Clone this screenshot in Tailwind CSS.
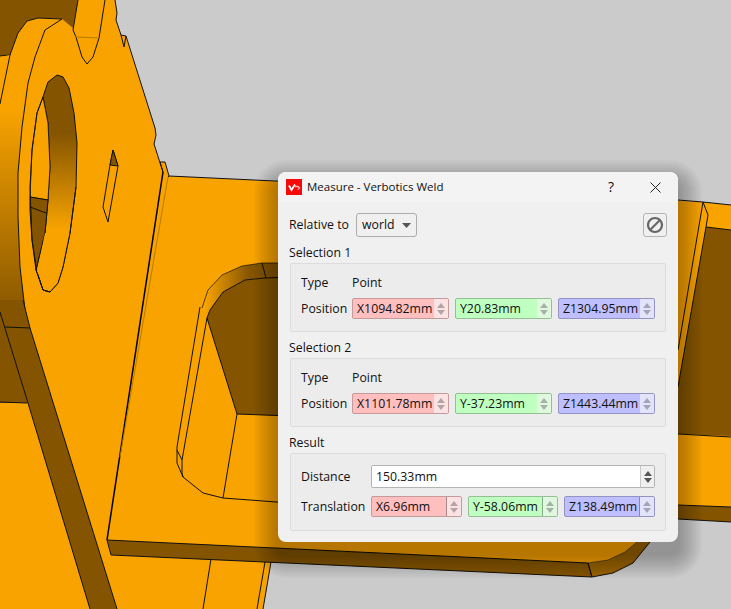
<!DOCTYPE html>
<html lang="en">
<head>
    <meta charset="UTF-8">
    <title>Measure - Verbotics Weld</title>
    <script src="https://cdn.jsdelivr.net/npm/@tailwindcss/browser@4"></script>
</head>
<body class="relative w-[731px] h-[609px] overflow-hidden bg-[#cbcbcb] font-['Open_Sans','Noto_Sans',sans-serif] text-[12.3px] leading-[18px] text-[#111]">

    <!-- 3D viewport -->
    <svg class="absolute inset-0" width="731" height="609" viewBox="0 0 731 609" fill="none">
        <defs>
            <linearGradient id="side" x1="0" y1="110" x2="0" y2="310" gradientUnits="userSpaceOnUse">
                <stop offset="0" stop-color="#f8a300"/>
                <stop offset="1" stop-color="#8a5800"/>
            </linearGradient>
            <linearGradient id="bore" x1="0" y1="100" x2="0" y2="230" gradientUnits="userSpaceOnUse">
                <stop offset="0" stop-color="#845400"/>
                <stop offset="0.25" stop-color="#845400"/>
                <stop offset="1" stop-color="#f8a300"/>
            </linearGradient>
            <linearGradient id="slot" x1="205" y1="0" x2="250" y2="0" gradientUnits="userSpaceOnUse">
                <stop offset="0" stop-color="#f8a300"/>
                <stop offset="1" stop-color="#845400"/>
            </linearGradient>
        </defs>

        <!-- base plate -->
        <polygon points="160,162 165,162 169,176 703,202 731,205 731,522 678,519 650,542 633,563 613,573 592,577 111,555 107,540" fill="#f8a300"/>
        <polyline points="169,176 678,200 703,202 731,205" stroke="#111"/>
        <polygon points="588,563 608,560 625,552 637,542 650,542 633,563 613,573 592,577" fill="#9a6400"/>
        <polyline points="588,563 608,560 625,552 637,542" stroke="#111" stroke-opacity="0.5"/>
        <polyline points="592,577 613,573 633,563 650,542" stroke="#111"/>

        <!-- far side, right of the dialog -->
        <polygon points="706,227 731,230 731,436 678,434 678,387" fill="#845400"/>
        <polyline points="731,230 706,227 708,215 703,202 678,350" stroke="#111"/>
        <line x1="706" y1="227" x2="678" y2="387" stroke="#111"/>
        <line x1="678" y1="434" x2="731" y2="437" stroke="#111"/>
        <polygon points="678,505 731,507 731,522 678,519" fill="#845400"/>
        <line x1="678" y1="505" x2="731" y2="507" stroke="#111"/>
        <line x1="678" y1="519" x2="731" y2="522" stroke="#111"/>

        <!-- slot in the base plate -->
        <polygon points="200,310 208,290 222,275 242,266 262,263 290,263 290,278 265,278 245,280 223,292 210,310 207,318" fill="url(#slot)"/>
        <polygon points="207,318 210,310 223,292 245,280 265,278 290,278 290,416 237,414" fill="#845400"/>
        <polyline points="207,318 210,310 223,292 245,280 265,278 290,277" stroke="#111"/>
        <polyline points="202,308 208,290 222,275 242,266 262,263 290,263" stroke="#111" stroke-opacity="0.7"/>
        <line x1="262" y1="263" x2="266" y2="278" stroke="#111"/>
        <line x1="207" y1="318" x2="237" y2="414" stroke="#111"/>
        <line x1="237" y1="414" x2="290" y2="416" stroke="#111"/>
        <line x1="237" y1="414" x2="223" y2="498" stroke="#111"/>
        <polyline points="200,307 177,447 177,463 183,477 203,493 223,498 290,503" stroke="#111"/>
        <polyline points="207,318 182,460 182,473 183,477" stroke="#111"/>
        <line x1="177" y1="450" x2="182" y2="460" stroke="#111"/>

        <!-- upright flange and lower plate -->
        <polygon points="0,0 115,0 117,13 116,20 121,35 126,36 155,128 156,135 154,144 163,172 107,540 111,555 271,562 263,609 0,609" fill="#f8a300"/>
        <polyline points="115,0 117,13 116,20 121,35 126,36 155,128 156,135 154,144 163,172" stroke="#111"/>
        <polyline points="121,35 124,47 126,36" stroke="#111"/>
        <polyline points="160,162 165,162 169,176 168,177" stroke="#111"/>
        <polyline points="160,162 163,172" stroke="#111"/>
        <line x1="163" y1="172" x2="107" y2="540" stroke="#000" stroke-width="1.5"/>
        <line x1="168" y1="177" x2="120" y2="457" stroke="#b87a00"/>
        <polygon points="107,540 588,563 592,577 111,555" fill="#845400" stroke="#111"/>
        <line x1="588" y1="563" x2="592" y2="577" stroke="#111"/>

        <!-- top left dark block and tab -->
        <polygon points="0,0 78,0 73,28 62,19 38,18 27,21 18,33 10,55 0,56" fill="#845400"/>
        <line x1="0" y1="56" x2="10" y2="55" stroke="#111"/>
        <polyline points="78,0 73,30 76,37 82,57 87,64 93,57 99,38 105,0" stroke="#111"/>
        <line x1="75" y1="37" x2="99" y2="38" stroke="#b87a00"/>

        <!-- rim of the ring -->
        <polygon points="0,57 10,55 18,33 27,21 38,18 62,19 45,30 35,57 28,83 22,127 18,173 18,217 20,267 25,310 0,310" fill="url(#side)"/>
        <polyline points="62,19 38,18 27,21 18,33 10,55 0,104" stroke="#111"/>
        <polyline points="62,19 45,30 35,57 28,83 22,127 18,173 18,217 20,267 25,310" stroke="#111"/>

        <!-- bore of the ring -->
        <polygon points="57,75 63,77 69,88 74,113 77,143 76,187 70,233 63,267 58,283 50,292 43,290 37,272 36,270 45,233 48,200 50,167 48,123 43,97 48,82" fill="url(#bore)" stroke="#111"/>
        <polygon points="43,97 48,123 50,167 48,200 30,197 32,150 37,113" fill="#f8a300" stroke="#111" stroke-opacity="0.8"/>
        <polygon points="30,197 48,200 45,233 36,270 32,240 30,210" fill="#845400" stroke="#111"/>
        <line x1="30" y1="207" x2="46" y2="213" stroke="#111"/>
        <polyline points="43,97 37,113 32,150 30,187 32,240 37,272 43,290 50,292" stroke="#111"/>
        <polygon points="37,272 50,292 58,283 63,267 70,233 45,233" fill="#f8a300"/>
        <polyline points="36,270 43,290 50,292 58,283 63,267 70,233 76,187" stroke="#111"/>

        <!-- small slit -->
        <polygon points="113,150 118,166 108,222 103,207 110,165" fill="#f8a300" stroke="#111"/>
        <polygon points="113,150 118,166 110,165" fill="#845400" stroke="#111"/>

        <!-- lower left band -->
        <polygon points="0,300 23,300 30,328 117,609 90,609 28,403 0,403" fill="#845400"/>
        <polyline points="0,312 28,403 90,609" stroke="#111"/>
        <polyline points="23,300 30,328 117,609" stroke="#111"/>
        <line x1="5" y1="327" x2="30" y2="328" stroke="#111"/>
        <line x1="0" y1="402" x2="27" y2="403" stroke="#111"/>

        <!-- legs under the plate -->
        <line x1="211" y1="559" x2="203" y2="609" stroke="#111"/>
        <line x1="265" y1="562" x2="257" y2="609" stroke="#111"/>
        <line x1="271" y1="562" x2="263" y2="609" stroke="#111"/>

        <!-- dialog drop shadow, stacked soft layers -->
        <g fill="#000" fill-opacity="0.022" transform="translate(0 6)">
            <rect x="276" y="176" width="404" height="374" rx="10"/>
            <rect x="274" y="174" width="408" height="378" rx="12"/>
            <rect x="272" y="172" width="412" height="382" rx="14"/>
            <rect x="270" y="170" width="416" height="386" rx="16"/>
            <rect x="268" y="168" width="420" height="390" rx="18"/>
            <rect x="266" y="166" width="424" height="394" rx="20"/>
            <rect x="264" y="164" width="428" height="398" rx="22"/>
            <rect x="262" y="162" width="432" height="402" rx="24"/>
            <rect x="260" y="160" width="436" height="406" rx="26"/>
            <rect x="258" y="158" width="440" height="410" rx="28"/>
            <rect x="256" y="156" width="444" height="414" rx="30"/>
            <rect x="254" y="154" width="448" height="418" rx="32"/>
        </g>
    </svg>

    <!-- dialog -->
    <div class="absolute left-[278px] top-[172px] w-[400px] h-[370px] rounded-lg bg-[#f0f0f0]">
        <div class="flex items-center h-[30px] rounded-t-lg bg-[#f3f3f3] pl-2">
            <svg width="16" height="16" viewBox="0 0 16 16">
                <rect width="16" height="16" fill="#f50a0a"/>
                <path d="M3 6.500l2.500 4.500 3.500-5.500" stroke="#fff" stroke-width="1.800" fill="none"/>
                <path d="M9 7.500h3l1.500 1.500-1.500 1.500" stroke="#ffb0b0" stroke-width="1.300" fill="none"/>
            </svg>
            <span class="ml-[5px] text-[11.500px]">Measure - Verbotics Weld</span>
            <span class="ml-auto w-[10px] text-center text-[14px]">?</span>
            <svg class="ml-[34px] mr-[17px]" width="11" height="11" viewBox="0 0 11 11">
                <path d="M0.500 0.500l10 10M10.500 0.500l-10 10" stroke="#222"/>
            </svg>
        </div>

        <div class="px-3 pt-[11px]">
            <div class="flex items-center h-6">
                <span class="-ml-px w-[61px] whitespace-nowrap">Relative to</span>
                <div class="ml-[6px] flex items-center w-[61px] h-6 pl-[5px] border border-[#adadad] rounded-[3px] bg-[#f0f0f0]">
                    <span>world</span>
                    <svg class="ml-auto mr-[5px]" width="9" height="5" viewBox="0 0 9 5"><path d="M0 0h9L4.500 5z" fill="#555"/></svg>
                </div>
                <div class="ml-auto -mr-px flex items-center justify-center w-6 h-6 border border-[#b4b4b4] rounded-[3px] bg-[#f0f0f0]">
                    <svg width="18" height="18" viewBox="0 0 18 18" fill="none">
                        <circle cx="9" cy="9" r="7" stroke="#666" stroke-width="2.200"/>
                        <path d="M4.500 13.500l9-9" stroke="#666" stroke-width="2.200"/>
                    </svg>
                </div>
            </div>

            <div class="h-[26px] pt-[7px] -ml-px">Selection 1</div>
            <div class="h-[69px] border border-[#dcdcdc] rounded-[2px] bg-[#ececec] pl-[10px] pt-[10px]">
                <div class="flex items-center h-[18px]"><span class="w-[51px]">Type</span><span>Point</span></div>
                <div class="flex items-center h-[21px] mt-[6px]">
                    <span class="w-[51px]">Position</span>
                    <div class="flex gap-[6px]">
                        <div class="flex w-[97px] h-[21px] border border-[#c49a9a] rounded-[2px] bg-[#ffbfbf]">
                            <span class="flex-1 pl-1 leading-[19px]">X1094.82mm</span>
                            <div class="flex flex-col items-center justify-center gap-[2px] w-[14px] bg-[#fbe3e3]">
                                <svg width="8" height="5" viewBox="0 0 8 5"><path d="M4 0l4 5H0z" fill="#b3a5a5"/></svg>
                                <svg width="8" height="5" viewBox="0 0 8 5"><path d="M0 0h8L4 5z" fill="#b3a5a5"/></svg>
                            </div>
                        </div>
                        <div class="flex w-[97px] h-[21px] border border-[#94c094] rounded-[2px] bg-[#bfffbf]">
                            <span class="flex-1 pl-1 leading-[19px]">Y20.83mm</span>
                            <div class="flex flex-col items-center justify-center gap-[2px] w-[14px] bg-[#e0f8e0]">
                                <svg width="8" height="5" viewBox="0 0 8 5"><path d="M4 0l4 5H0z" fill="#a5b3a5"/></svg>
                                <svg width="8" height="5" viewBox="0 0 8 5"><path d="M0 0h8L4 5z" fill="#a5b3a5"/></svg>
                            </div>
                        </div>
                        <div class="flex w-[97px] h-[21px] border border-[#9494c4] rounded-[2px] bg-[#bfbfff]">
                            <span class="flex-1 pl-1 leading-[19px]">Z1304.95mm</span>
                            <div class="flex flex-col items-center justify-center gap-[2px] w-[14px] bg-[#e3e3fb]">
                                <svg width="8" height="5" viewBox="0 0 8 5"><path d="M4 0l4 5H0z" fill="#a5a5b3"/></svg>
                                <svg width="8" height="5" viewBox="0 0 8 5"><path d="M0 0h8L4 5z" fill="#a5a5b3"/></svg>
                            </div>
                        </div>
                    </div>
                </div>
            </div>

            <div class="h-[26px] pt-[7px] -ml-px">Selection 2</div>
            <div class="h-[69px] border border-[#dcdcdc] rounded-[2px] bg-[#ececec] pl-[10px] pt-[10px]">
                <div class="flex items-center h-[18px]"><span class="w-[51px]">Type</span><span>Point</span></div>
                <div class="flex items-center h-[21px] mt-[6px]">
                    <span class="w-[51px]">Position</span>
                    <div class="flex gap-[6px]">
                        <div class="flex w-[97px] h-[21px] border border-[#c49a9a] rounded-[2px] bg-[#ffbfbf]">
                            <span class="flex-1 pl-1 leading-[19px]">X1101.78mm</span>
                            <div class="flex flex-col items-center justify-center gap-[2px] w-[14px] bg-[#fbe3e3]">
                                <svg width="8" height="5" viewBox="0 0 8 5"><path d="M4 0l4 5H0z" fill="#b3a5a5"/></svg>
                                <svg width="8" height="5" viewBox="0 0 8 5"><path d="M0 0h8L4 5z" fill="#b3a5a5"/></svg>
                            </div>
                        </div>
                        <div class="flex w-[97px] h-[21px] border border-[#94c094] rounded-[2px] bg-[#bfffbf]">
                            <span class="flex-1 pl-1 leading-[19px]">Y-37.23mm</span>
                            <div class="flex flex-col items-center justify-center gap-[2px] w-[14px] bg-[#e0f8e0]">
                                <svg width="8" height="5" viewBox="0 0 8 5"><path d="M4 0l4 5H0z" fill="#a5b3a5"/></svg>
                                <svg width="8" height="5" viewBox="0 0 8 5"><path d="M0 0h8L4 5z" fill="#a5b3a5"/></svg>
                            </div>
                        </div>
                        <div class="flex w-[97px] h-[21px] border border-[#9494c4] rounded-[2px] bg-[#bfbfff]">
                            <span class="flex-1 pl-1 leading-[19px]">Z1443.44mm</span>
                            <div class="flex flex-col items-center justify-center gap-[2px] w-[14px] bg-[#e3e3fb]">
                                <svg width="8" height="5" viewBox="0 0 8 5"><path d="M4 0l4 5H0z" fill="#a5a5b3"/></svg>
                                <svg width="8" height="5" viewBox="0 0 8 5"><path d="M0 0h8L4 5z" fill="#a5a5b3"/></svg>
                            </div>
                        </div>
                    </div>
                </div>
            </div>

            <div class="h-[26px] pt-[7px] -ml-px">Result</div>
            <div class="h-[78px] border border-[#dcdcdc] rounded-[2px] bg-[#ececec] pl-[10px] pt-[11px]">
                <div class="flex items-center h-[23px]">
                    <span class="w-[70px]">Distance</span>
                    <div class="flex w-[284px] h-[23px] border border-[#b4b4b4] rounded-[2px] bg-white">
                        <span class="flex-1 pl-1 leading-[21px]">150.33mm</span>
                        <div class="flex flex-col items-center justify-center gap-[2px] w-[14px] border-l border-[#c8c8c8] bg-[#f0f0f0]">
                            <svg width="8" height="5" viewBox="0 0 8 5"><path d="M4 0l4 5H0z" fill="#555"/></svg>
                            <svg width="8" height="5" viewBox="0 0 8 5"><path d="M0 0h8L4 5z" fill="#555"/></svg>
                        </div>
                    </div>
                </div>
                <div class="flex items-center h-[21px] mt-2">
                    <span class="w-[70px]">Translation</span>
                    <div class="flex gap-[6px]">
                        <div class="flex w-[91px] h-[21px] border border-[#c49a9a] rounded-[2px] bg-[#ffbfbf]">
                            <span class="flex-1 pl-1 leading-[19px]">X6.96mm</span>
                            <div class="flex flex-col items-center justify-center gap-[2px] w-[15px] border-l border-[#a88a8a] bg-[#fbe3e3]">
                                <svg width="8" height="5" viewBox="0 0 8 5"><path d="M4 0l4 5H0z" fill="#b3a5a5"/></svg>
                                <svg width="8" height="5" viewBox="0 0 8 5"><path d="M0 0h8L4 5z" fill="#b3a5a5"/></svg>
                            </div>
                        </div>
                        <div class="flex w-[90px] h-[21px] border border-[#94c094] rounded-[2px] bg-[#bfffbf]">
                            <span class="flex-1 pl-1 leading-[19px]">Y-58.06mm</span>
                            <div class="flex flex-col items-center justify-center gap-[2px] w-[15px] border-l border-[#8aa88a] bg-[#e0f8e0]">
                                <svg width="8" height="5" viewBox="0 0 8 5"><path d="M4 0l4 5H0z" fill="#a5b3a5"/></svg>
                                <svg width="8" height="5" viewBox="0 0 8 5"><path d="M0 0h8L4 5z" fill="#a5b3a5"/></svg>
                            </div>
                        </div>
                        <div class="flex w-[91px] h-[21px] border border-[#9494c4] rounded-[2px] bg-[#bfbfff]">
                            <span class="flex-1 pl-1 leading-[19px]">Z138.49mm</span>
                            <div class="flex flex-col items-center justify-center gap-[2px] w-[15px] border-l border-[#8a8aa8] bg-[#e3e3fb]">
                                <svg width="8" height="5" viewBox="0 0 8 5"><path d="M4 0l4 5H0z" fill="#a5a5b3"/></svg>
                                <svg width="8" height="5" viewBox="0 0 8 5"><path d="M0 0h8L4 5z" fill="#a5a5b3"/></svg>
                            </div>
                        </div>
                    </div>
                </div>
            </div>
        </div>
    </div>
</body>
</html>
